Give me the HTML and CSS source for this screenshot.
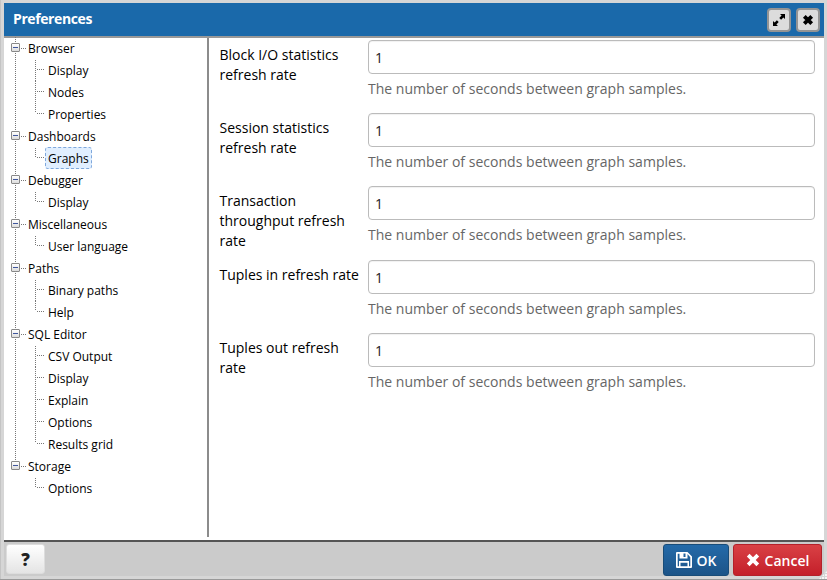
FILE: index.html
```
<!DOCTYPE html>
<html lang="en">
<head>
<meta charset="utf-8">
<title>Preferences</title>
<link rel="stylesheet" href="styles.css">
</head>
<body>
<div class="dialog">
  <header class="titlebar">
    <h1>Preferences</h1>
    <button class="tool" aria-label="Maximize"><svg width="14" height="14" viewBox="0 0 14 14"><path d="M8 1h5v5l-1.600-1.600-2.300 2.300-1.800-1.800 2.300-2.300zM6 13H1V8l1.600 1.600 2.300-2.300 1.800 1.800-2.300 2.300z"/></svg></button>
    <button class="tool" aria-label="Close"><svg width="12" height="12" viewBox="0 0 12 12"><path class="cross" d="M2.300 2.300l7.400 7.400M9.700 2.300l-7.400 7.400"/></svg></button>
  </header>
  <main class="content">
    <nav class="sidebar">
      <ul class="tree">
        <li><div class="node"><i class="toggle"></i><span>Browser</span></div>
          <ul><li><span>Display</span></li><li><span>Nodes</span></li><li><span>Properties</span></li></ul></li>
        <li><div class="node"><i class="toggle"></i><span>Dashboards</span></div>
          <ul><li><span class="selected">Graphs</span></li></ul></li>
        <li><div class="node"><i class="toggle"></i><span>Debugger</span></div>
          <ul><li><span>Display</span></li></ul></li>
        <li><div class="node"><i class="toggle"></i><span>Miscellaneous</span></div>
          <ul><li><span>User language</span></li></ul></li>
        <li><div class="node"><i class="toggle"></i><span>Paths</span></div>
          <ul><li><span>Binary paths</span></li><li><span>Help</span></li></ul></li>
        <li><div class="node"><i class="toggle"></i><span>SQL Editor</span></div>
          <ul><li><span>CSV Output</span></li><li><span>Display</span></li><li><span>Explain</span></li><li><span>Options</span></li><li><span>Results grid</span></li></ul></li>
        <li><div class="node"><i class="toggle"></i><span>Storage</span></div>
          <ul><li><span>Options</span></li></ul></li>
      </ul>
    </nav>
    <form class="fields">
      <div class="field"><label for="f1">Block I/O statistics refresh rate</label><div><input id="f1" value="1"><p>The number of seconds between graph samples.</p></div></div>
      <div class="field"><label for="f2">Session statistics refresh rate</label><div><input id="f2" value="1"><p>The number of seconds between graph samples.</p></div></div>
      <div class="field tall"><label for="f3">Transaction throughput refresh rate</label><div><input id="f3" value="1"><p>The number of seconds between graph samples.</p></div></div>
      <div class="field"><label for="f4">Tuples in refresh rate</label><div><input id="f4" value="1"><p>The number of seconds between graph samples.</p></div></div>
      <div class="field"><label for="f5">Tuples out refresh rate</label><div><input id="f5" value="1"><p>The number of seconds between graph samples.</p></div></div>
    </form>
  </main>
  <footer class="footer">
    <button class="btn help">?</button>
    <button class="btn ok"><svg width="16" height="16" viewBox="0 0 16 16"><path fill-rule="evenodd" d="M1 0h10.500L16 4.500V15a1 1 0 0 1-1 1H1a1 1 0 0 1-1-1V1a1 1 0 0 1 1-1zM1.700 1.700v12.600H3V9h10v5.300h1.300V5.200L11.500 2v4.500H3.500V1.700zM7.500 1.500v3.500h2V1.500zM4.500 10.700v3.600h7v-3.600z"/></svg><span>OK</span></button>
    <button class="btn cancel"><svg width="14" height="14" viewBox="0 0 14 14"><path class="cross" d="M2.200 2.200l9.600 9.600M11.800 2.200l-9.600 9.600"/></svg><span>Cancel</span></button>
  </footer>
  <i class="grip"></i>
</div>
</body>
</html>
```
FILE: styles.css
```
* { box-sizing: border-box; }
body { margin: 0; font-family: "Open Sans", sans-serif; font-size: 14px; color: #000; }
button { font-family: inherit; margin: 0; padding: 0; }
svg { display: block; fill: currentColor; }
.cross { stroke: currentColor; stroke-width: 3.8; fill: none; }
.dialog {
  position: relative;
  display: flex; flex-direction: column;
  width: 827px; height: 580px;
  padding: 3px 3px 1px 4px;
  background: #d6d6d6;
  border-bottom: 1px solid #999;
  box-shadow: inset 1px 0 #c4c4c4;
  overflow: hidden;
}
.titlebar {
  display: flex; align-items: center; gap: 5px;
  height: 35px; padding: 0 4px 0 9px;
  background: #1a69aa; border-bottom: 2px solid #999;
  color: #fff;
}
.titlebar h1 { flex: 1; margin: -2px 0 0; font-size: 14px; line-height: 20px; font-weight: 700; letter-spacing: -0.4px; }
.tool {
  display: flex; align-items: center; justify-content: center;
  width: 24px; height: 24px;
  border: 2px solid #949494; border-radius: 4px;
  background: #dcdcdc; color: #000;
}
.content { display: flex; height: 502px; background: #fff; }
.sidebar { width: 205px; height: 499px; border-right: 2px solid #8c8c8c; }
.tree, .tree ul { list-style: none; margin: 0; padding: 0; }
.tree { margin-top: -1px; font-size: 12px; line-height: 22px; }
.tree > li { padding-left: 11px; background: repeating-linear-gradient(#777 0 1px, transparent 1px 2px) 11px 0 / 1px 100% no-repeat; }
.tree > li:last-child { background-size: 1px 10px; }
.node { display: flex; align-items: center; height: 22px; margin-left: -4px; }
.node::after { content: ""; order: 1; width: 6px; height: 1px; margin-right: 2px; background: repeating-linear-gradient(90deg, transparent 0 1px, #777 1px 2px); }
.node span { order: 2; padding-top: 1px; }
.toggle {
  display: flex; align-items: center; justify-content: center;
  width: 9px; height: 9px; margin-top: -1px;
  border: 1px solid #888; border-radius: 1px;
  background: linear-gradient(#fff, #ddd);
}
.toggle::after { content: ""; width: 5px; height: 1px; background: #3f569c; }
.tree ul li {
  display: flex; height: 22px; margin-left: 20px;
  background: repeating-linear-gradient(#777 0 1px, transparent 1px 2px) 0 0 / 1px 22px no-repeat;
}
.tree ul li:first-child { background-position: 0 1px; }
.tree ul li:last-child { background-size: 1px 10px; }
.tree ul li::before { content: ""; width: 9px; height: 1px; margin: 10px 1px 0 1px; background: repeating-linear-gradient(90deg, transparent 0 1px, #777 1px 2px); }
.tree ul span { height: 22px; border: 1px solid transparent; padding: 0 1px; line-height: 22px; }
.tree ul .selected { margin-left: -1px; padding: 0 2px; background: #e1efff; border: 1px dashed #7fa8dc; border-radius: 3px; }
.fields { flex: 1; padding: 2px 9px 0 10px; }
.field { display: grid; grid-template-columns: 149px 447px; height: 73px; }
.field.tall { height: 74px; }
.field label { padding: 5px 8px 0 0.5px; line-height: 20px; }
.field input {
  display: block; width: 447px; height: 34px; padding: 0 7px 0 6px;
  border: 1px solid #bbb; border-radius: 4px; outline: 0;
  font: 14px "Open Sans", sans-serif; color: #222;
  background: #fff; box-shadow: inset 0 1px 1px rgba(0,0,0,.06);
}
.field p { margin: 5px 0 0; line-height: 20px; color: #666; letter-spacing: 0.02px; }
.footer {
  display: flex; align-items: flex-start; gap: 4px;
  height: 36px; padding: 2px 2px 0; margin-bottom: 2px;
  border-top: 2px solid #555; background: #cbcbcb;
}
.btn {
  display: flex; align-items: center; justify-content: center; gap: 5px;
  height: 32px; border-radius: 3px; color: #fff;
  font-size: 14px; font-weight: 600;
}
.help { width: 39px; height: 30px; margin-top: 0; margin-right: auto; border: 1px solid #ddd; background: linear-gradient(#fff, #e4e4e4); color: #222; font-size: 17px; font-weight: 800; }
.ok { width: 66px; border: 1px solid #194c78; background: linear-gradient(#246aa9, #1c5488); }
.cancel { width: 89px; margin-right: 0; border: 1px solid #b3212a; background: linear-gradient(#d94145, #c41f2a); }
.grip {
  position: absolute; right: 0; bottom: 0; width: 8px; height: 8px;
  background: radial-gradient(circle at 1px 1px, #f6f6f6 0.8px, transparent 1px) 0 0 / 3px 3px;
  clip-path: polygon(100% 0, 100% 100%, 0 100%);
}
```
